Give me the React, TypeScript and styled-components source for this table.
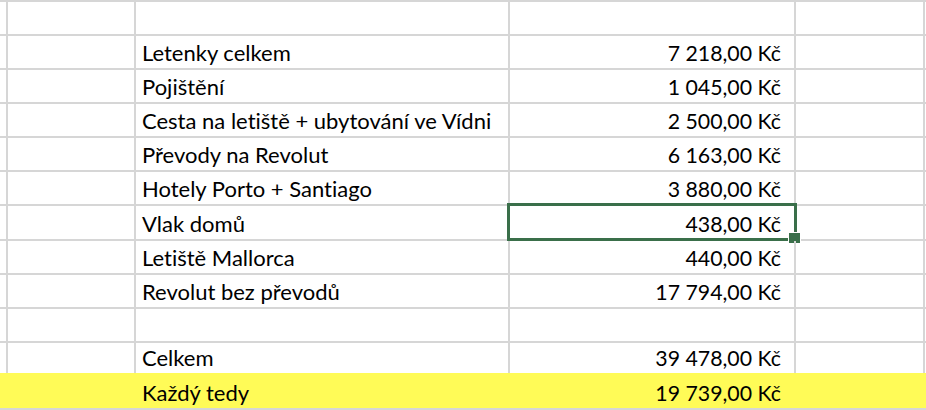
import React from "react";
import styled, { createGlobalStyle } from "styled-components";

const Global = createGlobalStyle`
  html, body { margin: 0; padding: 0; background: #ffffff; }
  body { overflow: hidden; }
`;

const LINE = "#d6d6d6";
const YELLOW = "#fffb57";
const GREEN = "#3a6f4a";

const Sheet = styled.div`
  width: 926px;
  height: 410px;
  overflow: hidden;
  display: flex;
  flex-direction: column;
  font-family: Lato, "Open Sans", sans-serif;
  font-variant-ligatures: none;
  color: #000;
`;

const Row = styled.div<{ $h: number; $hl?: boolean; $noBottom?: boolean }>`
  flex: 0 0 auto;
  height: ${(p) => p.$h}px;
  box-sizing: border-box;
  display: grid;
  grid-template-columns: 5px 131px 374px 286px 129px 1fr;
  border-bottom: ${(p) => (p.$noBottom ? "none" : `2px solid ${LINE}`)};
  background: ${(p) => (p.$hl ? YELLOW : "transparent")};
`;

const Cell = styled.div<{ $hl?: boolean; $align?: "left" | "right" }>`
  position: relative;
  box-sizing: border-box;
  border-right: 2px solid ${(p) => (p.$hl ? "transparent" : LINE)};
  display: flex;
  align-items: flex-end;
  justify-content: ${(p) => (p.$align === "right" ? "flex-end" : "flex-start")};
  padding: ${(p) => (p.$align === "right" ? "0 13px 2px 0" : "0 0 2px 6px")};
  white-space: nowrap;
  font-size: ${(p) => (p.$align === "right" ? "21.3px" : "22px")};
  line-height: 26px;
`;

const Selection = styled.div`
  position: absolute;
  left: -3px;
  top: -3px;
  right: -3px;
  bottom: -2px;
  border: 3px solid ${GREEN};
  pointer-events: none;
`;

const Handle = styled.div`
  position: absolute;
  right: -6px;
  bottom: -5px;
  width: 11px;
  height: 10px;
  background: ${GREEN};
  outline: 1px solid #ffffff;
`;

type Item = { label: string; amount: string; selected?: boolean; h?: number };

const items: Item[] = [
  { label: "Letenky celkem", amount: "7 218,00 Kč" },
  { label: "Pojištění", amount: "1 045,00 Kč" },
  { label: "Cesta na letiště + ubytování ve Vídni", amount: "2 500,00 Kč" },
  { label: "Převody na Revolut", amount: "6 163,00 Kč" },
  { label: "Hotely Porto + Santiago", amount: "3 880,00 Kč" },
  { label: "Vlak domů", amount: "438,00 Kč", selected: true, h: 35 },
  { label: "Letiště Mallorca", amount: "440,00 Kč" },
  { label: "Revolut bez převodů", amount: "17 794,00 Kč" },
];

function DataRow({
  label,
  amount,
  h = 34,
  hl,
  noBottom,
  selected,
}: {
  label?: string;
  amount?: string;
  h?: number;
  hl?: boolean;
  noBottom?: boolean;
  selected?: boolean;
}) {
  return (
    <Row $h={h} $hl={hl} $noBottom={noBottom}>
      <Cell $hl={hl} />
      <Cell $hl={hl} />
      <Cell $hl={hl}>{label}</Cell>
      <Cell $hl={hl} $align="right">
        {amount}
        {selected && (
          <Selection>
            <Handle />
          </Selection>
        )}
      </Cell>
      <Cell $hl={hl} />
      <Cell $hl={hl} />
    </Row>
  );
}

export default function App() {
  return (
    <>
      <Global />
      <Sheet>
        <DataRow h={2} />
        <DataRow />
        {items.map((it) => (
          <DataRow key={it.label} label={it.label} amount={it.amount} selected={it.selected} h={it.h} />
        ))}
        <DataRow />
        <DataRow label="Celkem" amount="39 478,00 Kč" h={30} noBottom />
        <DataRow label="Každý tedy" amount="19 739,00 Kč" h={37} hl />
        <DataRow h={34} />
      </Sheet>
    </>
  );
}
